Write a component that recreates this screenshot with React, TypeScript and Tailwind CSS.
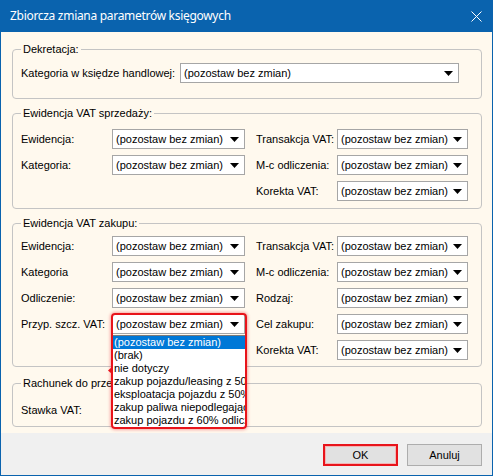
import React from 'react';

const KEEP = '(pozostaw bez zmian)';

const listItems = [
  '(pozostaw bez zmian)',
  '(brak)',
  'nie dotyczy',
  'zakup pojazdu/leasing z 50% odliczeniem',
  'eksploatacja pojazdu z 50% odliczeniem',
  'zakup paliwa niepodlegającego odliczeniu',
  'zakup pojazdu z 60% odliczeniem',
];

function Combo({ w, value = KEEP }: { w: string; value?: string }) {
  return (
    <div className={`${w} h-5 shrink-0 bg-white border border-[#a6a6a6] flex items-center pl-[3px] pr-[5px]`}>
      <span className="flex-1 whitespace-nowrap overflow-hidden">{value}</span>
      <svg width="9" height="5" viewBox="0 0 9 5" className="shrink-0">
        <path d="M0 0h9L4.5 5z" fill="#000" />
      </svg>
    </div>
  );
}

function Label({ children }: { children: React.ReactNode }) {
  return <div className="h-5 flex items-center whitespace-nowrap">{children}</div>;
}

function Group({ title, className, children }: { title: string; className: string; children: React.ReactNode }) {
  return (
    <fieldset className={`w-[470px] border border-[#c4c4c4] rounded-[4px] pl-[8px] pr-[8px] ${className}`}>
      <legend className="px-[2px] leading-[13px] whitespace-nowrap">{title}</legend>
      {children}
    </fieldset>
  );
}

function OpenCombo() {
  return (
    <div className="relative w-[133px]">
      <Combo w="w-[133px]" />
      {/* rozwinięta lista */}
      <div className="absolute left-0 top-[21px] w-[134px] h-[93px] bg-white border border-[#7a7a7a] z-10 overflow-hidden">
        {listItems.map((it, i) => (
          <div
            key={it}
            className={`h-[13px] leading-[13px] pl-[1px] whitespace-nowrap ${i === 0 ? 'bg-[#0078d7] text-white' : 'text-black'}`}
          >
            {it}
          </div>
        ))}
      </div>
      {/* czerwone podświetlenie */}
      <div className="absolute left-[-1px] top-[-1px] w-[136px] h-[116px] border-2 border-[#e8141b] rounded-[4px] shadow-[0_0_3px_1px_rgba(232,20,27,0.35)] z-20 pointer-events-none" />
      <svg width="4" height="7" viewBox="0 0 4 7" className="absolute left-[-4px] top-[53px] z-20">
        <path d="M4 0L0 3.5L4 7z" fill="#e8141b" />
      </svg>
    </div>
  );
}

export default function App() {
  return (
    <div className="w-[493px] h-[476px] bg-[#0a63ae] px-[1px] pb-[1px] flex flex-col font-['Liberation_Sans',Arial,sans-serif] text-[11px] text-black">
      <div className="h-[32px] shrink-0 flex items-center justify-between pl-[9px] pr-[10px] text-white">
        <span className="font-['Noto_Sans',sans-serif] text-[12px] tracking-[-0.3px]">Zbiorcza zmiana parametrów księgowych</span>
        <svg width="11" height="11" viewBox="0 0 11 11">
          <path d="M0.5 0.5L10.5 10.5M10.5 0.5L0.5 10.5" stroke="#fff" strokeWidth="1" />
        </svg>
      </div>

      <div className="flex-1 flex flex-col bg-[#fff9ee]">
        <div className="flex-1 flex flex-col px-[11px]">
          <Group title="Dekretacja:" className="mt-[11px] pt-[7px] pb-[15px]">
            <div className="flex items-center">
              <div className="w-[159px]"><Label>Kategoria w księdze handlowej:</Label></div>
              <Combo w="w-[279px]" />
            </div>
          </Group>

          <Group title="Ewidencja VAT sprzedaży:" className="mt-[8px] pt-[9px] pb-[7px]">
            <div className="grid grid-cols-[91px_144px_81px_131px] gap-y-[6px] items-center">
              <Label>Ewidencja:</Label>
              <Combo w="w-[133px]" />
              <Label>Transakcja VAT:</Label>
              <Combo w="w-[131px]" />
              <Label>Kategoria:</Label>
              <Combo w="w-[133px]" />
              <Label>M-c odliczenia:</Label>
              <Combo w="w-[131px]" />
              <div />
              <div />
              <Label>Korekta VAT:</Label>
              <Combo w="w-[131px]" />
            </div>
          </Group>

          <Group title="Ewidencja VAT zakupu:" className="mt-[8px] pt-[6px] pb-[6px]">
            <div className="grid grid-cols-[91px_144px_81px_131px] gap-y-[6px] items-center">
              <Label>Ewidencja:</Label>
              <Combo w="w-[133px]" />
              <Label>Transakcja VAT:</Label>
              <Combo w="w-[131px]" />
              <Label>Kategoria</Label>
              <Combo w="w-[133px]" />
              <Label>M-c odliczenia:</Label>
              <Combo w="w-[131px]" />
              <Label>Odliczenie:</Label>
              <Combo w="w-[133px]" />
              <Label>Rodzaj:</Label>
              <Combo w="w-[131px]" />
              <Label>Przyp. szcz. VAT:</Label>
              <OpenCombo />
              <Label>Cel zakupu:</Label>
              <Combo w="w-[131px]" />
              <div />
              <div />
              <Label>Korekta VAT:</Label>
              <Combo w="w-[131px]" />
            </div>
          </Group>

          <Group title="Rachunek do przeniesienia:" className="mt-[10px] pt-[10px] pb-[6px]">
            <div className="flex items-center">
              <div className="w-[91px]"><Label>Stawka VAT:</Label></div>
              <Combo w="w-[133px]" />
            </div>
          </Group>
        </div>

        <div className="h-[42px] shrink-0 bg-[#f0f0f0] flex justify-end items-start pt-[11px] pr-[10px] gap-[9px] text-[11px]">
          <button className="w-[75px] h-[22px] border-2 border-[#e8141b] bg-[#e1e1e1] shadow-[inset_0_0_0_1px_#f3b5b5]">OK</button>
          <button className="w-[75px] h-[22px] border border-[#adadad] bg-[#e1e1e1]">Anuluj</button>
        </div>
      </div>
    </div>
  );
}
